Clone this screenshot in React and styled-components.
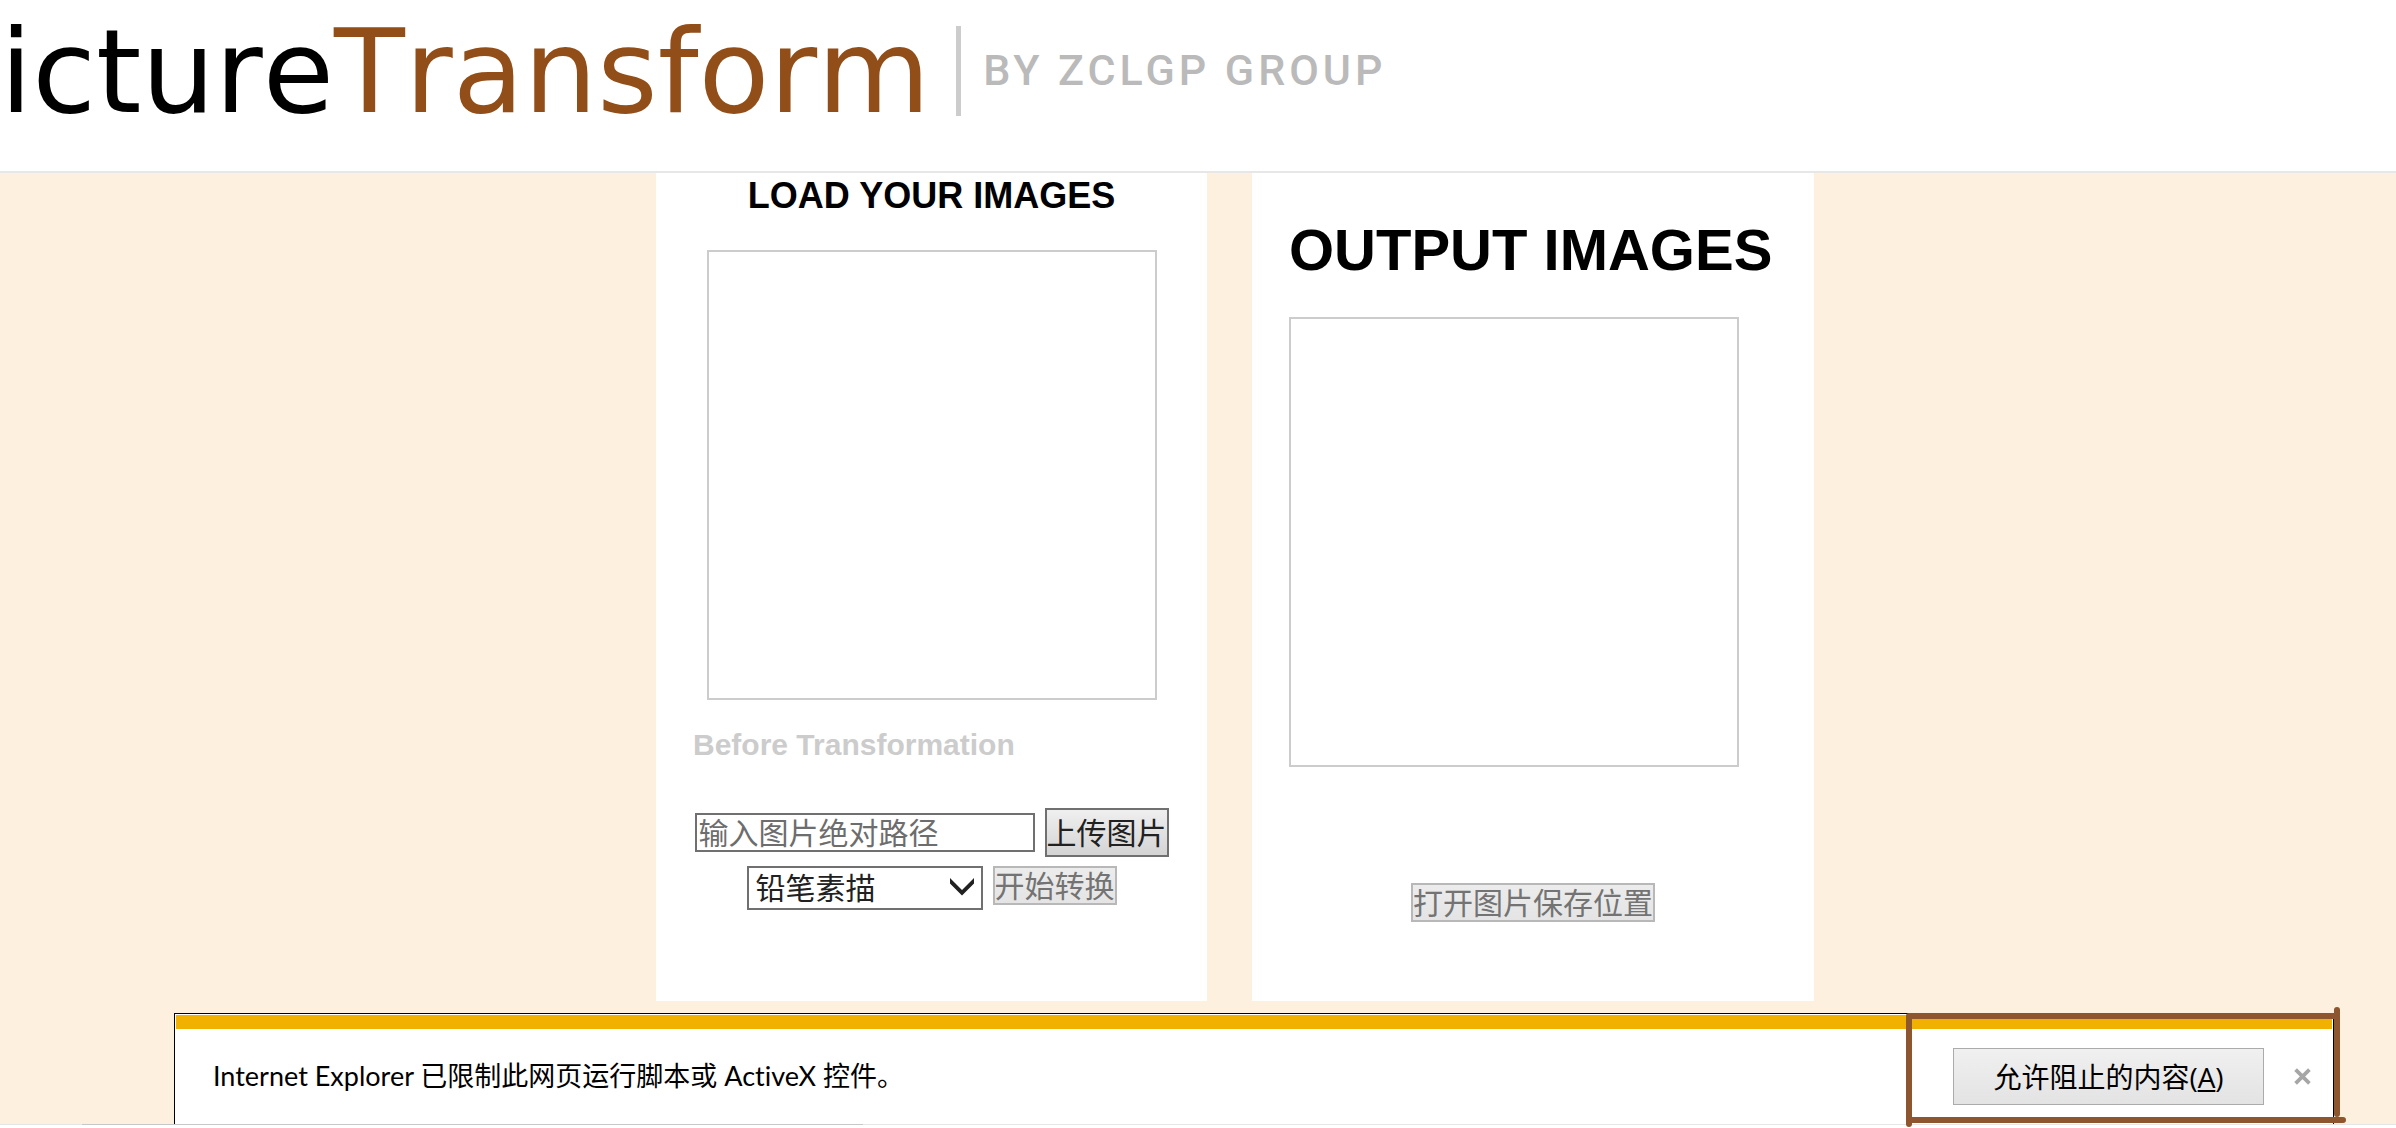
import React from "react";
import styled, { createGlobalStyle } from "styled-components";

const cjk = '"Open Sans", "Noto Sans CJK SC", sans-serif';
const arial = '"Liberation Sans", Arial, sans-serif';

const GlobalStyle = createGlobalStyle`
  *, *::before, *::after { box-sizing: border-box; }
  body { margin: 0; background: #fff; font-family: ${arial}; color: #000; }
  h1, h2, h3, p { margin: 0; }
  button, input, select { margin: 0; border-radius: 0; font-family: ${cjk}; }
`;

const Page = styled.div`
  display: flex;
  flex-direction: column;
  min-height: 100vh;
  overflow: hidden;
`;

const Header = styled.header`
  display: flex;
  align-items: flex-start;
  height: 173px;
  padding-top: 26px;
  border-bottom: 2px solid #e7e7e7;
  white-space: nowrap;
`;

const Wordmark = styled.h1`
  font: 400 116px/92px "DejaVu Sans", sans-serif;
  font-kerning: none;
`;

const Accent = styled.span`
  color: #924e18;
`;

const Tagline = styled.p`
  margin-left: 26px;
  padding-left: 22px;
  border-left: 5px solid #ccc;
  font: 500 43px/88px Roboto, sans-serif;
  height: 90px;
  letter-spacing: 4px;
  color: #bababa;
`;

const Main = styled.main`
  flex: 1;
  display: flex;
  flex-direction: column;
  gap: 12px;
  background: #fef0df;
`;

const Cards = styled.div`
  display: flex;
  justify-content: center;
  gap: 45px;
  padding-left: 74px;
`;

const Card = styled.section`
  display: flex;
  flex-direction: column;
  flex: 0 0 ${(p) => p.$width}px;
  min-height: 828px;
  padding: 0 37px;
  background: #fff;
`;

const LoadTitle = styled.h2`
  padding-top: 3px;
  font-size: 36px;
  line-height: 40px;
  text-align: center;
`;

const OutputTitle = styled.h2`
  padding: 45px 0 1px;
  font-size: 58px;
  line-height: 64px;
  white-space: nowrap;
`;

const Preview = styled.div`
  width: 450px;
  height: 450px;
  margin-top: 34px;
  align-self: ${(p) => (p.$centered ? "center" : "flex-start")};
  border: 2px solid #ccc;
`;

const Caption = styled.h3`
  margin-top: 28px;
  font-size: 30px;
  line-height: 34px;
  color: #ccc;
`;

const Controls = styled.form`
  display: flex;
  flex-direction: column;
  align-items: center;
  gap: 9px;
  margin-top: ${(p) => p.$top}px;
`;

const ControlRow = styled.div`
  display: flex;
  align-items: ${(p) => p.$align};
  gap: 10px;
`;

const PathInput = styled.input`
  width: 340px;
  height: 39px;
  padding: 0 2px;
  border: 2px solid #707070;
  background: #fff;
  font-size: 30px;
  line-height: 34px;
  &::placeholder { color: #6d6d6d; opacity: 1; }
`;

const ActionButton = styled.button`
  height: ${(p) => (p.disabled ? 39 : 49)}px;
  padding: 0;
  border: 2px solid ${(p) => (p.disabled ? "#b8b8b8" : "#707070")};
  background: ${(p) =>
    p.disabled ? "linear-gradient(#ececec, #e4e4e4)" : "linear-gradient(#efefef, #d4d4d4)"};
  color: ${(p) => (p.disabled ? "#737373" : "#212121")};
  font-size: 30px;
  line-height: 34px;
  white-space: nowrap;
`;

const SelectWrap = styled.span`
  position: relative;
  display: block;
`;

const StyleSelect = styled.select`
  appearance: none;
  display: block;
  width: 236px;
  height: 44px;
  padding: 0 44px 0 7px;
  border: 2px solid #707070;
  background: #fff;
  color: #212121;
  font-size: 30px;
  line-height: 38px;
`;

const Chevron = styled.svg`
  position: absolute;
  right: 9px;
  top: 12px;
  pointer-events: none;
`;

const Notice = styled.aside`
  position: relative;
  display: flex;
  flex-direction: column;
  height: 111px;
  margin: 0 62px 0 174px;
  padding: 1px 1px 0;
  border: 1px solid #000;
  border-bottom: 0;
  background: #fff;
`;

const NoticeStripe = styled.div`
  height: 14px;
  background: #f2b100;
`;

const NoticeBody = styled.div`
  display: flex;
  align-items: center;
  flex: 1;
  padding: 0 21px 0 37px;
`;

const NoticeText = styled.p`
  flex: 1;
  padding-bottom: 2px;
  font-family: Lato, "Noto Sans CJK SC", sans-serif;
  font-size: 27px;
  line-height: 40px;
  font-variant-ligatures: none;
`;

const AllowButton = styled.button`
  width: 311px;
  height: 57px;
  padding: 0;
  border: 1px solid #ababab;
  background: linear-gradient(#f0f0f0, #e3e3e3);
  color: #000;
  font-size: 28px;
  line-height: 40px;
`;

const CloseButton = styled.button`
  display: flex;
  margin-left: 30px;
  padding: 0;
  border: 0;
  background: none;
`;

const Marker = styled.svg`
  position: absolute;
  right: -14px;
  top: -9px;
  pointer-events: none;
`;

const Footer = styled.footer`
  height: 4px;
  background: linear-gradient(90deg, #e6e6e6 82px, #c8c8c8 82px 36%, #e6e6e6 36%) top / 100% 1px no-repeat #fff;
`;

export default function App() {
  return (
    <Page>
      <GlobalStyle />
      <Header>
        <Wordmark>
          icture<Accent>Transform</Accent>
        </Wordmark>
        <Tagline>BY ZCLGP GROUP</Tagline>
      </Header>
      <Main>
        <Cards>
          <Card $width={551}>
            <LoadTitle>LOAD YOUR IMAGES</LoadTitle>
            <Preview $centered />
            <Caption>Before Transformation</Caption>
            <Controls $top={46}>
              <ControlRow $align="center">
                <PathInput aria-label="图片路径" placeholder="输入图片绝对路径" />
                <ActionButton type="button">上传图片</ActionButton>
              </ControlRow>
              <ControlRow $align="flex-start">
                <SelectWrap>
                  <StyleSelect aria-label="转换风格">
                    <option>铅笔素描</option>
                  </StyleSelect>
                  <Chevron width="24" height="18" viewBox="0 0 24 18" aria-hidden="true">
                    <path d="M0 0 12 12 24 0V5.500L12 17.500 0 5.500Z" fill="#212121" />
                  </Chevron>
                </SelectWrap>
                <ActionButton type="button" disabled>开始转换</ActionButton>
              </ControlRow>
            </Controls>
          </Card>
          <Card $width={562}>
            <OutputTitle>OUTPUT IMAGES</OutputTitle>
            <Preview />
            <Controls $top={116}>
              <ActionButton type="button" disabled>打开图片保存位置</ActionButton>
            </Controls>
          </Card>
        </Cards>
        <Notice>
          <NoticeStripe />
          <NoticeBody>
            <NoticeText>Internet Explorer 已限制此网页运行脚本或 ActiveX 控件。</NoticeText>
            <AllowButton type="button">
              允许阻止的内容(<u>A</u>)
            </AllowButton>
            <CloseButton type="button" aria-label="关闭">
              <svg width="17" height="17" viewBox="0 0 16 16" aria-hidden="true">
                <path d="M1.500 1.500 14.500 14.500M14.500 1.500 1.500 14.500" stroke="#a6a6a6" strokeWidth="3.500" />
              </svg>
            </CloseButton>
          </NoticeBody>
          <Marker width="444" height="124" viewBox="0 0 444 124" aria-hidden="true">
            <path
              d="M6 119V11H434M434 5V109M8 115H440"
              fill="none"
              stroke="#8d562e"
              strokeWidth="6"
              strokeLinecap="round"
              strokeLinejoin="round"
            />
          </Marker>
        </Notice>
      </Main>
      <Footer />
    </Page>
  );
}
